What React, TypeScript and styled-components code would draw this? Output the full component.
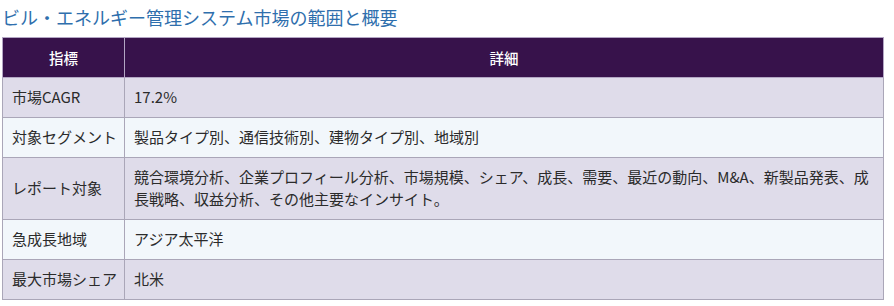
import styled, { createGlobalStyle } from "styled-components";

const rows = [
  { label: "市場CAGR", detail: "17.2%" },
  { label: "対象セグメント", detail: "製品タイプ別、通信技術別、建物タイプ別、地域別" },
  {
    label: "レポート対象",
    detail:
      "競合環境分析、企業プロフィール分析、市場規模、シェア、成長、需要、最近の動向、M&A、新製品発表、成長戦略、収益分析、その他主要なインサイト。",
  },
  { label: "急成長地域", detail: "アジア太平洋" },
  { label: "最大市場シェア", detail: "北米" },
];

const App = () => {
  return (
    <>
      <GlobalStyle />
      <Page>
        <Title>ビル・エネルギー管理システム市場の範囲と概要</Title>
        <Table>
          <colgroup>
            <col style={{ width: 122 }} />
            <col />
          </colgroup>
          <thead>
            <tr>
              <HeadCell>指標</HeadCell>
              <HeadCell>詳細</HeadCell>
            </tr>
          </thead>
          <tbody>
            {rows.map((row, i) => (
              <Row key={row.label} $odd={i % 2 === 0}>
                <Cell $label>{row.label}</Cell>
                <Cell>{row.detail}</Cell>
              </Row>
            ))}
          </tbody>
        </Table>
      </Page>
    </>
  );
};

const GlobalStyle = createGlobalStyle`
  body {
    margin: 0;
    background: #ffffff;
    font-family: "Noto Sans CJK JP", "Noto Sans", sans-serif;
  }
`;

const Page = styled.div`
  width: 882px;
  padding: 2px 0 0 2px;
`;

const Title = styled.h3`
  margin: 0;
  height: 35px;
  font-size: 18px;
  font-weight: 400;
  line-height: 30px;
  color: #2f6fad;
`;

const Table = styled.table`
  width: 882px;
  border-collapse: collapse;
  table-layout: fixed;
  font-size: 15px;
  color: #2b2b2b;
`;

const HeadCell = styled.th`
  height: 39px;
  padding: 0 9px;
  background: #37124b;
  color: #ffffff;
  font-size: 14.5px;
  font-weight: 500;
  text-align: center;
  border: 1px solid #b3a6c4;
`;

const Row = styled.tr<{ $odd: boolean }>`
  background: ${(p) => (p.$odd ? "#dfdcea" : "#f2f7fb")};
`;

const Cell = styled.td<{ $label?: boolean }>`
  padding: 8px 9px 9px;
  padding-right: ${(p) => (p.$label ? "2px" : "9px")};
  white-space: ${(p) => (p.$label ? "nowrap" : "normal")};
  line-height: 22px;
  border: 1px solid #aaa6b8;
  vertical-align: middle;
`;

export default App;
